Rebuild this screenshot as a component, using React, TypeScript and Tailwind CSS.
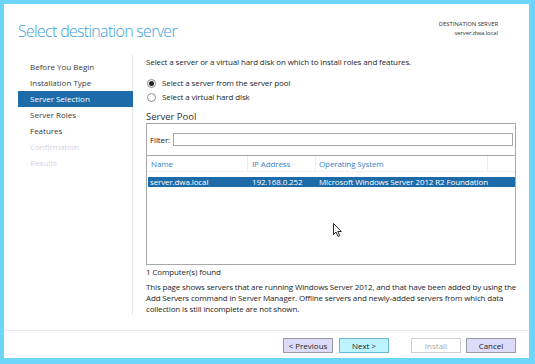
const navItems = [
  { label: "Before You Begin", state: "done" },
  { label: "Installation Type", state: "done" },
  { label: "Server Selection", state: "active" },
  { label: "Server Roles", state: "done" },
  { label: "Features", state: "done" },
  { label: "Confirmation", state: "off" },
  { label: "Results", state: "off" },
];

function Radio({ checked, label }: { checked: boolean; label: string }) {
  return (
    <div className="flex items-center h-[14px]">
      <span className="w-[9px] h-[9px] ml-[1px] rounded-full border border-[#8a8a8a] bg-white flex items-center justify-center">
        {checked && <span className="w-[5px] h-[5px] rounded-full bg-[#222]" />}
      </span>
      <span className="ml-[6px]">{label}</span>
    </div>
  );
}

function Btn({ children, kind }: { children: React.ReactNode; kind: "normal" | "primary" | "disabled" }) {
  const cls =
    kind === "primary"
      ? "bg-[#bdf3fd] border-[#6cb8d8] text-[#222]"
      : kind === "disabled"
      ? "bg-white border-[#cfcfcf] text-[#a8a8a8]"
      : "bg-[#dcdcf9] border-[#9a9aa8] text-[#222]";
  return (
    <div className={`w-[50px] h-[15px] border flex items-center justify-center text-[8px] ${cls}`}>{children}</div>
  );
}

function Cursor() {
  return (
    <svg width="10" height="15" viewBox="0 0 10 15" className="absolute left-[186px] top-[67px]">
      <path d="M0.5 0.5 L0.5 11.5 L3 9 L5 13.5 L6.8 12.7 L4.8 8.5 L8.3 8.5 Z" fill="white" stroke="#111" strokeWidth="0.9" strokeLinejoin="round" />
    </svg>
  );
}

export default function App() {
  return (
    <div
      className="w-[535px] h-[364px] bg-[#6dd5fa] pl-[4px] pt-[4px] pr-[6px] pb-[6px] text-[#262626]"
      style={{ fontFamily: '"Open Sans", "Noto Sans", sans-serif' }}
    >
      <div className="w-full h-full bg-white flex flex-col">
        {/* header */}
        <div className="h-[51px] flex items-start justify-between pl-[14px] pr-[31px]">
          <h1 className="mt-[17px] text-[16px] leading-[20px] font-light text-[#3a9fd9] tracking-[-0.7px]">
            Select destination server
          </h1>
          <div className="mt-[16px] text-right text-[6px] leading-[9px] tracking-[-0.1px] text-[#333]">
            <div>DESTINATION SERVER</div>
            <div>server.dwa.local</div>
          </div>
        </div>

        {/* body */}
        <div className="flex h-[275px]">
          <nav className="w-[129px] pl-[14px] pt-[4px] border-r border-[#e6e6ec] h-[260px]">
            {navItems.map((it) => (
              <div
                key={it.label}
                className={`h-[16px] w-[115px] flex items-center pl-[12px] text-[8px] ${
                  it.state === "active"
                    ? "bg-[#1d6ba8] text-white"
                    : it.state === "off"
                    ? "text-[#d4d4dc]"
                    : "text-[#3a3a3a]"
                }`}
              >
                {it.label}
              </div>
            ))}
          </nav>

          <main className="flex-1 pl-[13px] pr-[13px] text-[8px] tracking-[-0.12px]">
            <p className="mt-[1px] h-[12px] leading-[12px]">
              Select a server or a virtual hard disk on which to install roles and features.
            </p>
            <div className="mt-[8px] flex flex-col">
              <Radio checked label="Select a server from the server pool" />
              <Radio checked={false} label="Select a virtual hard disk" />
            </div>
            <div className="mt-[6px] h-[13px] text-[9.5px] leading-[13px] text-[#333] tracking-normal">Server Pool</div>

            <div className="border border-[#a8a8a8] h-[142px] flex flex-col">
              <div className="h-[32px] flex items-center pl-[3px] pr-[2px] border-b border-[#a8a8a8]">
                <span>Filter:</span>
                <div className="ml-[3px] flex-1 h-[13px] border border-[#a8a8a8] bg-white" />
              </div>
              <div className="relative flex-1">
                <div className="h-[16px] flex items-center text-[#3a7fc3] border-b border-[#f0f0f4]">
                  <span className="w-[101px] pl-[4px] border-r border-[#ececf2] h-full flex items-center">Name</span>
                  <span className="w-[68px] pl-[4px] border-r border-[#ececf2] h-full flex items-center">IP Address</span>
                  <span className="w-[172px] pl-[3px] border-r border-[#ececf2] h-full flex items-center">Operating System</span>
                </div>
                <div className="mt-[5px] ml-[1px] h-[10px] bg-[#1d6ba8] text-white flex items-center">
                  <span className="w-[100px] pl-[2px]">server.dwa.local</span>
                  <span className="w-[68px] pl-[4px]">192.168.0.252</span>
                  <span className="pl-[3px]">Microsoft Windows Server 2012 R2 Foundation</span>
                </div>
                <Cursor />
              </div>
            </div>

            <div className="mt-[1px] h-[12px] leading-[12px]">1 Computer(s) found</div>
            <p className="mt-[3px] mr-[-8px] leading-[11px] tracking-[-0.15px]">
              This page shows servers that are running Windows Server 2012, and that have been added by using the Add
              Servers command in Server Manager. Offline servers and newly-added servers from which data collection is
              still incomplete are not shown.
            </p>
          </main>
        </div>

        {/* footer */}
        <div className="flex-1 border-t border-[#e8e6f8] flex items-start pt-[7px] pl-[279px]">
          <Btn kind="normal">&lt; Previous</Btn>
          <div className="ml-[6px]">
            <Btn kind="primary">Next &gt;</Btn>
          </div>
          <div className="ml-[22px]">
            <Btn kind="disabled">Install</Btn>
          </div>
          <div className="ml-[5px]">
            <Btn kind="normal">Cancel</Btn>
          </div>
        </div>
      </div>
    </div>
  );
}
